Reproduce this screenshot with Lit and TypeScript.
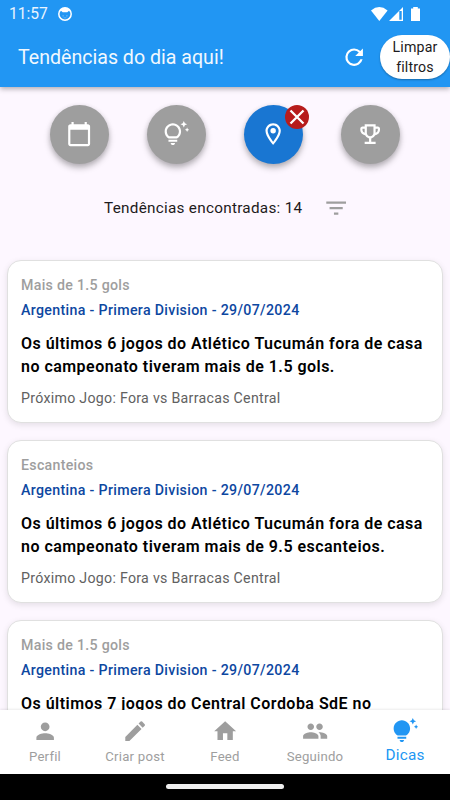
import { LitElement, html, svg, css } from "lit";
import { customElement, property } from "lit/decorators.js";

const shapes: Record<string, unknown> = {
  refresh: svg`<path d="M17.65 6.35A7.96 7.96 0 0 0 12 4a8 8 0 1 0 7.73 10h-2.08A6 6 0 1 1 12 6c1.66 0 3.14.69 4.22 1.78L13 11h7V4z"/>`,
  calendar: svg`<path d="M20 3h-1V1h-2v2H7V1H5v2H4c-1.100 0-2 .9-2 2v16c0 1.100.9 2 2 2h16c1.100 0 2-.9 2-2V5c0-1.100-.9-2-2-2zm0 18H4V8h16v13z"/>`,
  tipsOutline: svg`<path d="M7 20h4c0 1.100-.9 2-2 2s-2-.9-2-2zm-2-1h8v-2H5v2zm11.500-9.500c0 3.820-2.660 5.860-3.770 6.500H5.270C4.160 15.360 1.500 13.320 1.500 9.500 1.500 5.360 4.860 2 9 2s7.500 3.360 7.500 7.500zm-2 0C14.500 6.470 12.030 4 9 4S3.500 6.470 3.500 9.500c0 2.470 1.490 3.890 2.350 4.500h6.300c.86-.61 2.350-2.030 2.350-4.500zm6.870-2.130L20 8l1.370.63L22 10l.63-1.370L24 8l-1.370-.63L22 6l-.63 1.370zM19 6l.94-2.060L22 3l-2.060-.94L19 0l-.94 2.060L16 3l2.060.94L19 6z"/>`,
  tips: svg`<path d="M7 20h4c0 1.100-.9 2-2 2s-2-.9-2-2zm-2-1h8v-2H5v2zm11.500-9.500c0 3.820-2.660 5.860-3.770 6.500H5.270C4.160 15.360 1.500 13.320 1.500 9.500 1.500 5.360 4.860 2 9 2s7.500 3.360 7.500 7.500zm4.870-2.130L20 8l1.370.63L22 10l.63-1.370L24 8l-1.370-.63L22 6l-.63 1.370zM19 6l.94-2.060L22 3l-2.060-.94L19 0l-.94 2.060L16 3l2.060.94L19 6z"/>`,
  pin: svg`<path d="M12 2C8.130 2 5 5.130 5 9c0 5.250 7 13 7 13s7-7.750 7-13c0-3.870-3.130-7-7-7zM7 9c0-2.760 2.240-5 5-5s5 2.240 5 5c0 2.880-2.880 7.190-5 9.880C9.920 16.210 7 11.850 7 9z"/><circle cx="12" cy="9" r="2.500"/>`,
  trophy: svg`<path d="M19 5h-2V3H7v2H5c-1.100 0-2 .9-2 2v1c0 2.550 1.920 4.630 4.390 4.940A5.010 5.010 0 0 0 11 15.900V19H7v2h10v-2h-4v-3.100a5.010 5.010 0 0 0 3.610-2.960C19.080 12.630 21 10.550 21 8V7c0-1.100-.9-2-2-2zM5 8V7h2v3.820C5.840 10.400 5 9.300 5 8zm7 6c-1.650 0-3-1.350-3-3V5h6v6c0 1.650-1.350 3-3 3zm7-6c0 1.300-.84 2.400-2 2.820V7h2v1z"/>`,
  filter: svg`<path d="M10 18h4v-2h-4v2zM3 6v2h18V6H3zm3 7h12v-2H6v2z"/>`,
  person: svg`<path d="M12 12c2.210 0 4-1.790 4-4s-1.790-4-4-4-4 1.790-4 4 1.790 4 4 4zm0 2c-2.670 0-8 1.340-8 4v2h16v-2c0-2.660-5.330-4-8-4z"/>`,
  edit: svg`<path d="M3 17.250V21h3.750L17.810 9.940l-3.750-3.750L3 17.250zM20.710 7.040a1 1 0 0 0 0-1.410l-2.340-2.340a1 1 0 0 0-1.410 0l-1.830 1.830 3.750 3.750 1.830-1.830z"/>`,
  home: svg`<path d="M10 20v-6h4v6h5v-8h3L12 3 2 12h3v8z"/>`,
  group: svg`<path d="M16 11c1.660 0 2.990-1.340 2.990-3S17.660 5 16 5s-3 1.340-3 3 1.340 3 3 3zm-8 0c1.660 0 2.990-1.340 2.990-3S9.660 5 8 5 5 6.340 5 8s1.340 3 3 3zm0 2c-2.330 0-7 1.170-7 3.500V19h14v-2.500C15 14.170 10.330 13 8 13zm8 0c-.29 0-.62.02-.97.05 1.160.84 1.970 1.970 1.970 3.450V19h6v-2.500c0-2.330-4.670-3.500-7-3.500z"/>`,
  close: svg`<path d="M5.500 5.500l13 13M18.500 5.500l-13 13" fill="none" stroke="currentColor" stroke-width="2.300"/>`,
};

@customElement("app-icon")
class AppIcon extends LitElement {
  @property() name = "";
  static styles = css`
    :host { display: block; width: 26.300px; height: 26.300px; flex: none; }
    svg { display: block; width: 100%; height: 100%; fill: currentColor; }
  `;
  render() {
    return html`<svg viewBox="0 0 24 24">${shapes[this.name]}</svg>`;
  }
}

@customElement("trend-card")
class TrendCard extends LitElement {
  @property() kind = "";
  @property() league = "";
  @property() headline = "";
  @property() next = "";
  static styles = css`
    :host {
      display: block; box-sizing: border-box; height: 163px; flex: none;
      padding: 14px 13px 0; background: #fff; border: 1px solid #e0e0e0;
      border-radius: 14px; box-shadow: 0 2px 6px rgba(0, 0, 0, .1);
    }
    .kind, .league, .next { font-size: 14.200px; line-height: 21px; white-space: nowrap; }
    .kind { color: #9e9e9e; font-weight: 500; letter-spacing: .29px; }
    .league { color: #0d47a1; font-weight: 500; margin-top: 4px; letter-spacing: .33px; }
    .headline { color: #000; font-size: 16px; line-height: 23px; font-weight: 600; margin-top: 11px; letter-spacing: .47px; white-space: pre; }
    .next { color: #616161; margin-top: 10px; letter-spacing: .28px; }
  `;
  render() {
    return html`
      <div class="kind">${this.kind}</div>
      <div class="league">${this.league}</div>
      <div class="headline">${this.headline}</div>
      <div class="next">${this.next}</div>`;
  }
}

const league = "Argentina - Primera Division - 29/07/2024";
const trends = [
  { kind: "Mais de 1.5 gols", headline: "Os últimos 6 jogos do Atlético Tucumán fora de casa\nno campeonato tiveram mais de 1.5 gols.", next: "Próximo Jogo: Fora vs Barracas Central" },
  { kind: "Escanteios", headline: "Os últimos 6 jogos do Atlético Tucumán fora de casa\nno campeonato tiveram mais de 9.5 escanteios.", next: "Próximo Jogo: Fora vs Barracas Central" },
  { kind: "Mais de 1.5 gols", headline: "Os últimos 7 jogos do Central Cordoba SdE no", next: "" },
];
const tabs = [
  ["person", "Perfil"], ["edit", "Criar post"], ["home", "Feed"], ["group", "Seguindo"], ["tips", "Dicas"],
];

@customElement("app-root")
class AppRoot extends LitElement {
  static styles = css`
    :host {
      display: flex; flex-direction: column; width: 450px; height: 800px; overflow: hidden;
      background: #fdf7ff; font-family: Roboto, sans-serif; color: #1d1b20;
    }
    .top { flex: none; height: 87px; background: #2196f3; color: #fff; box-shadow: 0 2px 5px rgba(0, 0, 0, .3); z-index: 1; }
    .status { height: 27px; display: flex; align-items: center; padding: 0 29px 0 9px; }
    .clock { font-size: 15.600px; line-height: 25px; padding-top: 2px; width: 49px; color: #e9f4fe; }
    .face { width: 14px; height: 14px; }
    .signals { width: 50px; height: 16px; margin-left: auto; }
    .bar { height: 60px; display: flex; align-items: center; padding-left: 18px; }
    .title { font-size: 19.600px; line-height: 28px; padding-top: 2px; white-space: nowrap; flex: 1; color: #f1f8fe; }
    .bar app-icon { margin-right: 13px; }
    .clear {
      width: 70px; height: 44px; border-radius: 22px; background: #fff; color: #1d1b20;
      font-size: 14.200px; line-height: 20.500px; letter-spacing: .15px; text-align: center;
      display: flex; align-items: center; justify-content: center; box-shadow: 0 1px 2px rgba(0, 0, 0, .3);
    }
    .filters { flex: none; display: flex; gap: 38px; padding: 18px 50px 0; }
    .chip {
      position: relative; box-sizing: border-box; width: 59px; height: 59px; padding-right: 1px;
      border-radius: 50%; background: #9e9e9e; color: #fff;
      display: flex; align-items: center; justify-content: center;
      box-shadow: 0 4px 6px rgba(0, 0, 0, .25), 0 1px 5px rgba(0, 0, 0, .1);
    }
    .chip.on { background: #1976d2; }
    .badge {
      position: absolute; left: 40.500px; top: 0; width: 24px; height: 24px; border-radius: 50%;
      background: #b71c1c; display: flex; align-items: center; justify-content: center;
    }
    .badge app-icon { width: 24px; height: 24px; }
    .count { flex: none; height: 26px; margin-top: 31px; padding-left: 104px; display: flex; align-items: center; gap: 21px; }
    .count span { font-size: 15.300px; letter-spacing: .27px; width: 198px; white-space: nowrap; line-height: 26px; }
    .count app-icon { color: #9e9e9e; }
    .list { flex: 1; min-height: 0; overflow: hidden; display: flex; flex-direction: column; gap: 17px; margin-top: 32px; padding: 7px 7px 0; }
    .nav { flex: none; height: 64px; background: #fff; display: grid; grid-template-columns: repeat(5, 1fr); box-shadow: 0 -1px 2px rgba(0, 0, 0, .08); z-index: 1; }
    .tab { display: flex; flex-direction: column; align-items: center; padding-top: 8px; color: #9e9e9e; font-size: 13.200px; letter-spacing: .22px; }
    .tab span { line-height: 18px; margin-top: 4px; white-space: nowrap; }
    .tab.on { color: #2196f3; font-size: 15.300px; }
    .tab.on span { margin-top: 2px; }
    .system { flex: none; height: 26px; background: #000; display: flex; justify-content: center; }
    .handle { width: 118px; height: 5px; margin-top: 10px; border-radius: 3px; background: #eee; }
  `;
  render() {
    return html`
      <div class="top">
        <div class="status">
          <span class="clock">11:57</span>
          <svg class="face" viewBox="0 0 14 14">
            <circle cx="7" cy="7" r="6.200" fill="none" stroke="#fff" stroke-width="1.500"/>
            <path d="M1.500 5Q2.500 1 7 .8 11.500 1 12.500 5L11 3.800 9.300 5.300H4.700L3 3.800z" fill="#fff"/>
            <path d="M4.500 8.200h1.200v1.200H4.500zM8.300 8.200h1.200v1.200H8.300zM5.500 10.500h3v.8h-3z" fill="#fff" opacity=".4"/>
          </svg>
          <svg class="signals" viewBox="0 0 50 16" fill="#fff">
            <path d="M0 4.500Q8.300-2.300 16.600 4.500L8.300 15z"/>
            <path fill-rule="evenodd" d="M32 1v14H18zM30.700 5h-2.400v8.700h2.400z"/>
            <path d="M40 2.500h2.200V1h4.600v1.500H49V15h-9z"/>
          </svg>
        </div>
        <div class="bar">
          <span class="title">Tendências do dia aqui!</span>
          <app-icon name="refresh"></app-icon>
          <div class="clear">Limpar<br />filtros</div>
        </div>
      </div>
      <div class="filters">
        <div class="chip"><app-icon name="calendar"></app-icon></div>
        <div class="chip"><app-icon name="tipsOutline"></app-icon></div>
        <div class="chip on"><app-icon name="pin"></app-icon><div class="badge"><app-icon name="close"></app-icon></div></div>
        <div class="chip"><app-icon name="trophy"></app-icon></div>
      </div>
      <div class="count"><span>Tendências encontradas: 14</span><app-icon name="filter"></app-icon></div>
      <div class="list">
        ${trends.map((t) => html`<trend-card .kind=${t.kind} .league=${league} .headline=${t.headline} .next=${t.next}></trend-card>`)}
      </div>
      <div class="nav">
        ${tabs.map(([icon, label]) => html`<div class="tab ${icon === "tips" ? "on" : ""}"><app-icon name=${icon}></app-icon><span>${label}</span></div>`)}
      </div>
      <div class="system"><div class="handle"></div></div>`;
  }
}
